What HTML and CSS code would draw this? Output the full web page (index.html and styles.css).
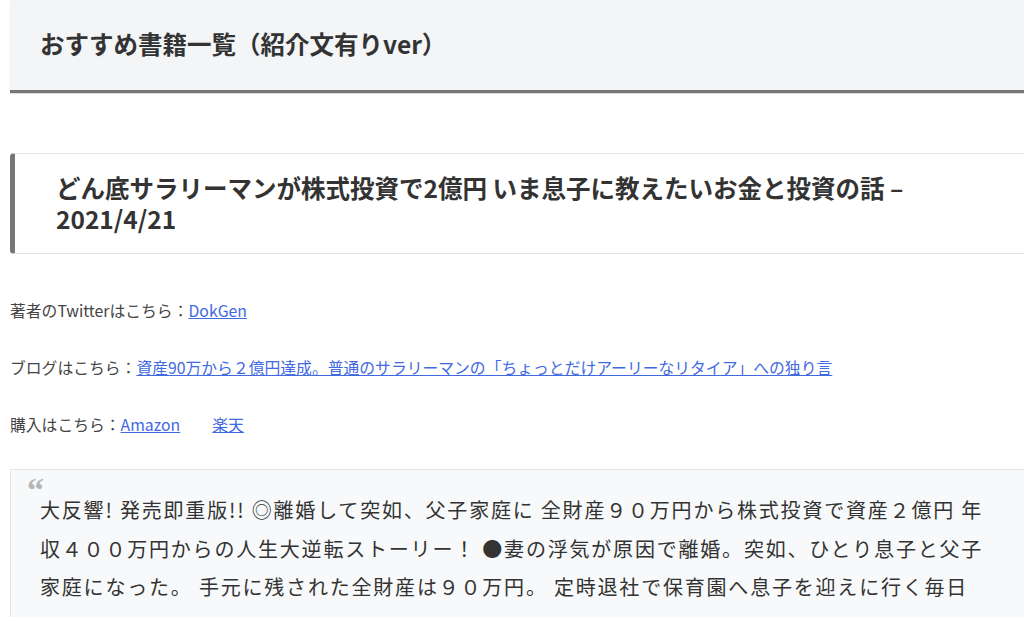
FILE: index.html
```html
<!DOCTYPE html>
<html lang="ja">
<head>
    <meta charset="UTF-8">
    <meta name="viewport" content="width=device-width, initial-scale=1.0">
    <title>おすすめ書籍一覧（紹介文有りver）</title>
    <link rel="stylesheet" href="styles.css">
</head>
<body>
    <div class="content">
        <h2 class="section-title">おすすめ書籍一覧（紹介文有りver）</h2>

        <h3 class="book-title">どん底サラリーマンが株式投資で2億円 いま息子に教えたいお金と投資の話 – 2021/4/21</h3>

        <p>著者のTwitterはこちら：<a href="#">DokGen</a></p>
        <p>ブログはこちら：<a href="#">資産90万から２億円達成。普通のサラリーマンの「ちょっとだけアーリーなリタイア」への独り言</a></p>
        <p>購入はこちら：<a href="#">Amazon</a><span class="sep"></span><a href="#">楽天</a></p>

        <blockquote class="book-desc">
            <p>大反響! 発売即重版!! ◎離婚して突如、父子家庭に 全財産９０万円から株式投資で資産２億円 年収４００万円からの人生大逆転ストーリー！ ●妻の浮気が原因で離婚。突如、ひとり息子と父子家庭になった。 手元に残された全財産は９０万円。 定時退社で保育園へ息子を迎えに行く毎日</p>
        </blockquote>
    </div>
</body>
</html>
```

FILE: styles.css
```css
html, body {
    margin: 0;
    padding: 0;
    overflow: hidden;
    background-color: #fff;
}
body {
    font-family: "Noto Sans CJK JP", "Noto Sans", sans-serif;
    color: #333;
}
.content {
    width: 1040px;
    margin-left: 10px;
}
.section-title {
    margin: 0;
    padding: 28px 30px 30px 30px;
    font-size: 24.5px;
    line-height: 32px;
    font-weight: bold;
    color: #333;
    background-color: #f4f5f7;
    border-bottom: 3px solid #777;
    border-radius: 3px 3px 0 0;
    box-shadow: 0 1px 1px rgba(0, 0, 0, 0.15);
}
.book-title {
    margin: 60px 0 0 0;
    padding: 18px 53px 19px 41px;
    font-size: 24.5px;
    line-height: 31px;
    font-weight: bold;
    color: #333;
    border-top: 1px solid #e3e3e3;
    border-bottom: 1px solid #e3e3e3;
    border-left: 5px solid #777;
    border-radius: 4px 0 0 4px;
}
p {
    margin: 0;
}
.content > p {
    font-size: 15.8px;
    line-height: 28px;
    color: #444;
    margin-top: 29px;
}
.content > p:first-of-type {
    margin-top: 43px;
}
a {
    color: #4169e1;
    text-decoration: underline;
}
.sep {
    display: inline-block;
    width: 32px;
}
.book-desc {
    position: relative;
    margin: 30px 0 0 0;
    padding: 21px 53px 60px 29px;
    background-color: #f8f9fa;
    border: 1px solid #e5e5e5;
}
.book-desc::before {
    content: "\201C";
    position: absolute;
    top: 4px;
    left: 16px;
    font-family: "Liberation Serif", serif;
    font-size: 34px;
    font-weight: bold;
    line-height: 32px;
    color: #b5b5b5;
}
.book-desc p {
    font-size: 20px;
    line-height: 38.5px;
    letter-spacing: 1.8px;
    color: #333;
}
```
